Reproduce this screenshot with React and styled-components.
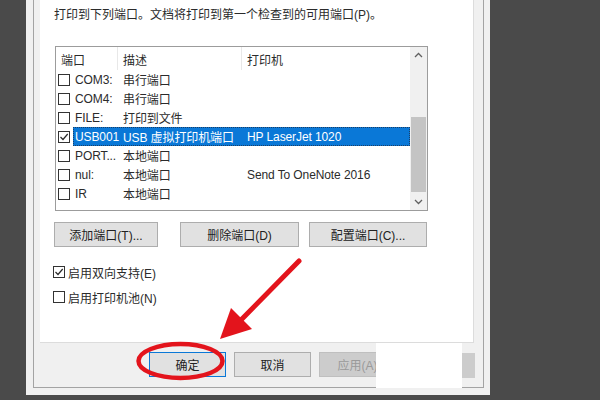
import React from "react";
import styled, { createGlobalStyle } from "styled-components";

const GlobalStyle = createGlobalStyle`
	html, body {
		margin: 0;
		padding: 0;
		background: #4a4a4a;
	}
	body {
		font-family: "Liberation Sans", "Noto Sans CJK SC", sans-serif;
		font-size: 12px;
		color: #2b2b2b;
	}
`;

const ports = [
	{ name: "COM3:", desc: "串行端口", printer: "" },
	{ name: "COM4:", desc: "串行端口", printer: "" },
	{ name: "FILE:", desc: "打印到文件", printer: "" },
	{ name: "USB001", desc: "USB 虚拟打印机端口", printer: "HP LaserJet 1020", checked: true, selected: true },
	{ name: "PORT...", desc: "本地端口", printer: "" },
	{ name: "nul:", desc: "本地端口", printer: "Send To OneNote 2016" },
	{ name: "IR", desc: "本地端口", printer: "" },
];

const CheckMark = () => (
	<svg width="10" height="10" viewBox="0 0 10 10">
		<polyline points="1.5,5 4,7.5 8.7,2" fill="none" stroke="#2a2a2a" strokeWidth="1.2" />
	</svg>
);

const Arrow = ({ up }) => (
	<svg width="9" height="6" viewBox="0 0 9 6">
		<polyline
			points={up ? "1,5 4.5,1.5 8,5" : "1,1 4.5,4.5 8,1"}
			fill="none"
			stroke="#606060"
			strokeWidth="1.3"
		/>
	</svg>
);

function App() {
	return (
		<>
			<GlobalStyle />
			<Screen>
				<Dialog>
					<Frame>
						<Panel>
							<Intro>打印到下列端口。文档将打印到第一个检查到的可用端口(P)。</Intro>
							<ListBox>
								<ListMain>
									<HeaderRow>
										<HeadCell width={62}>端口</HeadCell>
										<HeadCell width={124}>描述</HeadCell>
										<HeadCell>打印机</HeadCell>
									</HeaderRow>
									{ports.map((p) => (
										<Row key={p.name}>
											<RowBox>
												<Box>{p.checked && <CheckMark />}</Box>
											</RowBox>
											<RowItem selected={p.selected}>
												<Cell width={45} pad={2}>{p.name}</Cell>
												<Cell width={124} pad={5}>{p.desc}</Cell>
												<Cell pad={5}>{p.printer}</Cell>
											</RowItem>
										</Row>
									))}
								</ListMain>
								<ScrollBar>
									<ScrollButton><Arrow up /></ScrollButton>
									<ScrollTrack>
										<Thumb />
									</ScrollTrack>
									<ScrollButton><Arrow /></ScrollButton>
								</ScrollBar>
							</ListBox>
							<PortButtons>
								<Button width={104}>添加端口(T)...</Button>
								<Button width={119}>删除端口(D)</Button>
								<Button width={118}>配置端口(C)...</Button>
							</PortButtons>
							<Options>
								<Option>
									<Box><CheckMark /></Box>
									启用双向支持(E)
								</Option>
								<Option>
									<Box />
									启用打印机池(N)
								</Option>
							</Options>
						</Panel>
						<Footer>
							<Button width={77} primary>确定</Button>
							<Button width={77}>取消</Button>
							<Button width={77} disabled>应用(A)</Button>
						</Footer>
					</Frame>
				</Dialog>
				<Patch>
					<PatchWhite />
					<PatchGray />
				</Patch>
				<Annotation width="600" height="400" viewBox="0 0 600 400">
					<line x1="299" y1="261" x2="240" y2="321" stroke="#e3141c" strokeWidth="5" strokeLinecap="round" />
					<polygon points="220,339 231,308 252,329" fill="#e3141c" />
					<ellipse cx="180.5" cy="361" rx="42" ry="17" fill="none" stroke="#e3141c" strokeWidth="4.5" />
				</Annotation>
			</Screen>
		</>
	);
}

export default App;

const Screen = styled.div`
	position: relative;
	width: 600px;
	height: 400px;
	overflow: hidden;
	background: #4a4a4a;
	padding-left: 26px;
	box-sizing: border-box;
`;
const Dialog = styled.div`
	width: 464px;
	height: 395px;
	background: #f0f0f0;
	padding: 0 6px 7px 7px;
	box-sizing: border-box;
`;
const Frame = styled.div`
	height: 100%;
	border: 1px solid #a3a3a3;
	border-top: none;
	box-sizing: border-box;
	padding: 0 9px 0 6px;
	display: flex;
	flex-direction: column;
`;
const Panel = styled.div`
	height: 343px;
	background: #fff;
	border-right: 1px solid #dcdcdc;
	border-bottom: 1px solid #dcdcdc;
	box-sizing: border-box;
	padding-left: 14px;
	display: flex;
	flex-direction: column;
`;
const Intro = styled.div`
	margin-top: 7px;
	line-height: 16px;
	height: 16px;
	white-space: nowrap;
`;
const ListBox = styled.div`
	margin: 23px 0 0 1px;
	width: 373px;
	height: 165px;
	border: 1px solid #9c9c9c;
	box-sizing: border-box;
	display: flex;
	background: #fff;
`;
const ListMain = styled.div`
	width: 354px;
	display: flex;
	flex-direction: column;
`;
const HeaderRow = styled.div`
	display: flex;
	height: 23px;
	align-items: stretch;
`;
const HeadCell = styled.div`
	${(p) => (p.width ? `width: ${p.width}px;` : "flex: 1;")}
	padding-left: 5px;
	padding-top: 4px;
	box-sizing: border-box;
	border-right: 1px solid #e8e8e8;
	&:last-child {
		border-right: none;
	}
`;
const Row = styled.div`
	display: flex;
	height: 19px;
`;
const RowBox = styled.div`
	width: 17px;
	padding-left: 2px;
	box-sizing: border-box;
	display: flex;
	align-items: center;
`;
const Box = styled.div`
	width: 12px;
	height: 12px;
	border: 1px solid #333;
	background: #fff;
	box-sizing: border-box;
	display: flex;
	align-items: center;
	justify-content: center;
	flex-shrink: 0;
`;
const RowItem = styled.div`
	flex: 1;
	display: flex;
	align-items: center;
	white-space: nowrap;
	background: ${(p) => (p.selected ? "#0a78d7" : "transparent")};
	color: ${(p) => (p.selected ? "#fff" : "inherit")};
	outline: ${(p) => (p.selected ? "1px dotted #1b3f66" : "none")};
	outline-offset: -1px;
`;
const Cell = styled.div`
	${(p) => (p.width ? `width: ${p.width}px;` : "flex: 1;")}
	flex-shrink: 0;
	padding-left: ${(p) => p.pad}px;
	box-sizing: border-box;
	letter-spacing: -0.1px;
`;
const ScrollBar = styled.div`
	width: 17px;
	background: #f0f0f0;
	display: flex;
	flex-direction: column;
`;
const ScrollButton = styled.div`
	height: 17px;
	display: flex;
	align-items: center;
	justify-content: center;
`;
const ScrollTrack = styled.div`
	flex: 1;
	padding-top: 54px;
	padding-bottom: 3px;
	box-sizing: border-box;
	display: flex;
	flex-direction: column;
	align-items: center;
`;
const Thumb = styled.div`
	width: 15px;
	height: 75px;
	background: #c4c4c4;
`;
const PortButtons = styled.div`
	display: flex;
	margin-top: 11px;
	gap: 10px;
	& > :first-child {
		margin-right: 12px;
	}
`;
const Button = styled.div`
	width: ${(p) => p.width}px;
	height: 25px;
	box-sizing: border-box;
	display: flex;
	align-items: center;
	justify-content: center;
	white-space: nowrap;
	background: ${(p) => (p.disabled ? "#cccccc" : "#e1e1e1")};
	border: 1px solid ${(p) => (p.primary ? "#0a78d7" : p.disabled ? "#bfbfbf" : "#adadad")};
	color: ${(p) => (p.disabled ? "#9a9a9a" : "#222")};
`;
const Options = styled.div`
	margin-top: 17px;
	display: flex;
	flex-direction: column;
	gap: 9px;
	margin-left: -1px;
`;
const Option = styled.div`
	display: flex;
	align-items: center;
	gap: 3px;
	height: 16px;
`;
const Footer = styled.div`
	display: flex;
	padding: 9px 0 0 109px;
	gap: 8px;
`;
const Patch = styled.div`
	position: absolute;
	left: 376px;
	top: 343px;
	height: 45px;
	display: flex;
`;
const PatchWhite = styled.div`
	width: 86px;
	background: #fff;
`;
const PatchGray = styled.div`
	width: 13px;
	margin: 10px 0 10px;
	background: #cccccc;
`;
const Annotation = styled.svg`
	position: absolute;
	left: 0;
	top: 0;
	pointer-events: none;
`;
